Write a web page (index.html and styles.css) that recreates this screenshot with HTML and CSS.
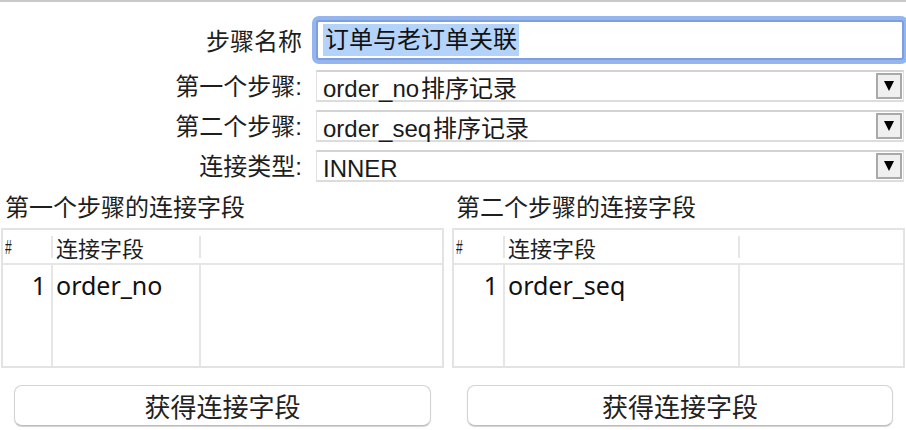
FILE: index.html
```html
<!DOCTYPE html>
<html lang="zh">
<head>
<meta charset="utf-8">
<title>连接</title>
<link rel="stylesheet" href="styles.css">
</head>
<body>
<div class="window">
  <div class="form">
    <label class="label">步骤名称</label>
    <div class="textfield"><span class="sel">订单与老订单关联</span></div>

    <label class="label">第一个步骤:</label>
    <div class="combo"><span class="combo-text">order_no<span class="cjk">排序记录</span></span><span class="arrow"><svg width="10" height="10" viewBox="0 0 10 10"><polygon points="0,0 10,0 5,10" fill="#000"/></svg></span></div>

    <label class="label">第二个步骤:</label>
    <div class="combo"><span class="combo-text">order_seq<span class="cjk">排序记录</span></span><span class="arrow"><svg width="10" height="10" viewBox="0 0 10 10"><polygon points="0,0 10,0 5,10" fill="#000"/></svg></span></div>

    <label class="label">连接类型:</label>
    <div class="combo"><span class="combo-text">INNER</span><span class="arrow"><svg width="10" height="10" viewBox="0 0 10 10"><polygon points="0,0 10,0 5,10" fill="#000"/></svg></span></div>
  </div>

  <div class="panes">
    <section class="pane pane-left">
      <div class="pane-title">第一个步骤的连接字段</div>
      <div class="table t-left">
        <div class="thead">
          <div class="th th-num"><span class="hash">#</span></div>
          <div class="th th-sep">连接字段</div>
          <div class="th th-sep"></div>
        </div>
        <div class="tbody">
          <div class="col col-num"><div class="cell num">1</div></div>
          <div class="col col-line"><div class="cell">order_no</div></div>
          <div class="col col-line"></div>
        </div>
      </div>
      <button class="btn">获得连接字段</button>
    </section>

    <section class="pane pane-right">
      <div class="pane-title">第二个步骤的连接字段</div>
      <div class="table t-right">
        <div class="thead">
          <div class="th th-num"><span class="hash">#</span></div>
          <div class="th th-sep">连接字段</div>
          <div class="th th-sep"></div>
        </div>
        <div class="tbody">
          <div class="col col-num"><div class="cell num">1</div></div>
          <div class="col col-line"><div class="cell">order_seq</div></div>
          <div class="col col-line"></div>
        </div>
      </div>
      <button class="btn">获得连接字段</button>
    </section>
  </div>
</div>
</body>
</html>
```

FILE: styles.css
```css
* { box-sizing: border-box; }

html, body {
  margin: 0;
  padding: 0;
  background: #ffffff;
}

body {
  font-family: "Liberation Sans", "Noto Sans CJK SC", sans-serif;
  color: #1a1a1a;
  width: 906px;
  height: 430px;
  overflow: hidden;
}

.window {
  border-top: 2px solid #c9c9c9;
  height: 430px;
}

/* ---------- form ---------- */
.form {
  display: grid;
  grid-template-columns: 302px 1fr;
  column-gap: 14px;
  row-gap: 8px;
  padding: 18px 2px 0 0;
}

.label {
  font-size: 24px;
  text-align: right;
  align-self: center;
  line-height: 28px;
  padding-top: 2px;
  color: #1e1e1e;
}

.textfield {
  height: 40px;
  border: 2px solid #7d9fe0;
  border-radius: 3px;
  box-shadow: 0 0 0 4px #95b5ee;
  background: #fff;
  display: flex;
  align-items: center;
  padding-left: 5px;
  margin-bottom: 2px;
  font-size: 24px;
}

.sel {
  background: #b4d3fb;
  line-height: 32px;
  padding: 0 2px 0 2px;
  color: #111;
}

.combo {
  height: 32px;
  border: 1px solid #e2e2e2;
  border-top: 2px solid #d3d3d3;
  border-bottom: 2px solid #dcdcdc;
  display: flex;
  align-items: center;
  justify-content: space-between;
  padding: 0 1px 0 6px;
  font-size: 24px;
  background: #fff;
}

.combo-text {
  line-height: 28px;
  padding-top: 5px;
  color: #1a1a1a;
}

.cjk {
  margin-left: 2px;
}

.arrow {
  width: 26px;
  height: 26px;
  border: 2px solid #a9a9a9;
  background: #f0f0f0;
  display: flex;
  align-items: center;
  justify-content: center;
}

/* ---------- panes ---------- */
.panes {
  display: grid;
  grid-template-columns: 443px 453px;
  column-gap: 8px;
  padding-left: 1px;
  margin-top: 11px;
}

.pane {
  display: flex;
  flex-direction: column;
}

.pane-title {
  font-size: 24px;
  line-height: 30px;
  padding-left: 4px;
  margin-bottom: 5px;
  color: #1e1e1e;
}

.table {
  height: 140px;
  border: 2px solid #e3e3e3;
  display: flex;
  flex-direction: column;
  background: #fff;
}

.thead {
  display: grid;
  height: 35px;
  padding: 6px 0 5px 0;
  border-bottom: 2px solid #e6e6e6;
}

.tbody {
  display: grid;
  flex: 1;
}

.t-left .thead, .t-left .tbody { grid-template-columns: 48px 148px 1fr; }
.t-right .thead, .t-right .tbody { grid-template-columns: 49px 235px 1fr; }

.th {
  font-size: 22px;
  line-height: 22px;
  height: 22px;
  color: #1e1e1e;
  font-family: "Noto Sans CJK SC", sans-serif;
}

.th-num { padding-left: 2px; }

.hash {
  display: inline-block;
  font-family: "Liberation Sans", sans-serif;
  font-size: 20px;
  transform: scaleX(0.6);
  transform-origin: left center;
  vertical-align: top;
}

.th-sep {
  border-left: 2px solid #e6e6e6;
  padding-left: 3px;
}

.col-line {
  border-left: 2px solid #e6e6e6;
}

.cell {
  font-family: "Noto Sans", "Liberation Sans", sans-serif;
  font-size: 25px;
  line-height: 36px;
  padding: 2px 0 0 3px;
  color: #111;
}

.cell.num {
  text-align: right;
  padding-right: 5px;
}

.btn {
  margin: 17px 13px 0 13px;
  height: 41px;
  border: 1px solid #d4d4d4;
  border-bottom-color: #bdbdbd;
  border-radius: 8px;
  background: #fff;
  box-shadow: 0 1px 1px rgba(0, 0, 0, 0.18);
  font-family: "Noto Sans CJK SC", sans-serif;
  font-size: 26px;
  line-height: 30px;
  color: #222;
  padding: 0;
}

.pane-right .btn { margin-left: 15px; margin-right: 12px; }
```
